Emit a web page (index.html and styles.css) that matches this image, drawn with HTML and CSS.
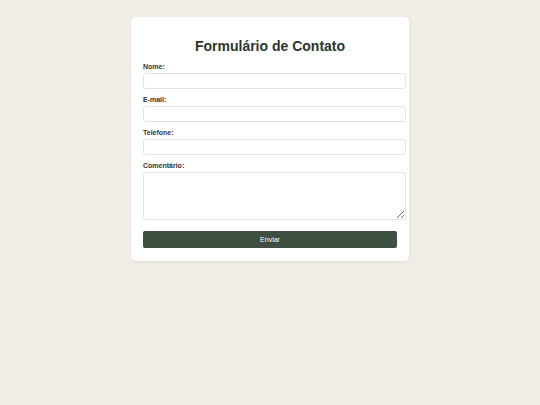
FILE: index.html
```html
<!DOCTYPE html>
<html lang="pt">
<head>
<meta charset="utf-8">
<title>Formulário de Contato</title>
<link rel="stylesheet" href="styles.css">
</head>
<body>
<div class="card">
  <h1 class="title">Formulário de Contato</h1>
  <form class="form">
    <label class="label" for="nome">Nome:</label>
    <input class="field" id="nome" type="text">
    <label class="label" for="email">E-mail:</label>
    <input class="field" id="email" type="email">
    <label class="label" for="tel">Telefone:</label>
    <input class="field" id="tel" type="tel">
    <label class="label" for="com">Comentário:</label>
    <textarea class="field area" id="com"></textarea>
    <button class="btn" type="button">Enviar</button>
  </form>
</div>
</body>
</html>
```
FILE: styles.css
```css
html, body {
  margin: 0;
  padding: 0;
}
body {
  background: #f1ece5;
  font-family: "Liberation Sans", Arial, sans-serif;
  width: 540px;
  height: 405px;
}
.card {
  box-sizing: border-box;
  width: 278px;
  margin: 17px 0 0 131px;
  background: #ffffff;
  border-radius: 5px;
  padding: 12px 12px 13px;
  box-shadow: 0 1px 3px rgba(0, 0, 0, 0.07);
}
.title {
  margin: 8px 0 7px;
  font-size: 14px;
  line-height: 18px;
  font-weight: bold;
  text-align: center;
  color: #2a352c;
}
.form {
  display: flex;
  flex-direction: column;
  margin: 0;
}
.label {
  display: block;
  font-size: 7px;
  line-height: 9px;
  font-weight: bold;
  color: #333333;
  margin-bottom: 2px;
}
.field {
  box-sizing: border-box;
  width: 263px;
  height: 16px;
  margin: 0 0 6px;
  padding: 0 4px;
  border: 1px solid #e3e3e3;
  border-radius: 3px;
  background: #ffffff;
  font-family: "Liberation Sans", Arial, sans-serif;
  font-size: 7px;
}
.area {
  height: 48px;
  margin-bottom: 11px;
  resize: vertical;
}
.btn {
  width: 254px;
  height: 17px;
  border: none;
  border-radius: 2px;
  background: #3e4f41;
  color: #ffffff;
  font-family: "Liberation Sans", Arial, sans-serif;
  font-size: 7px;
  padding: 0;
}
```
